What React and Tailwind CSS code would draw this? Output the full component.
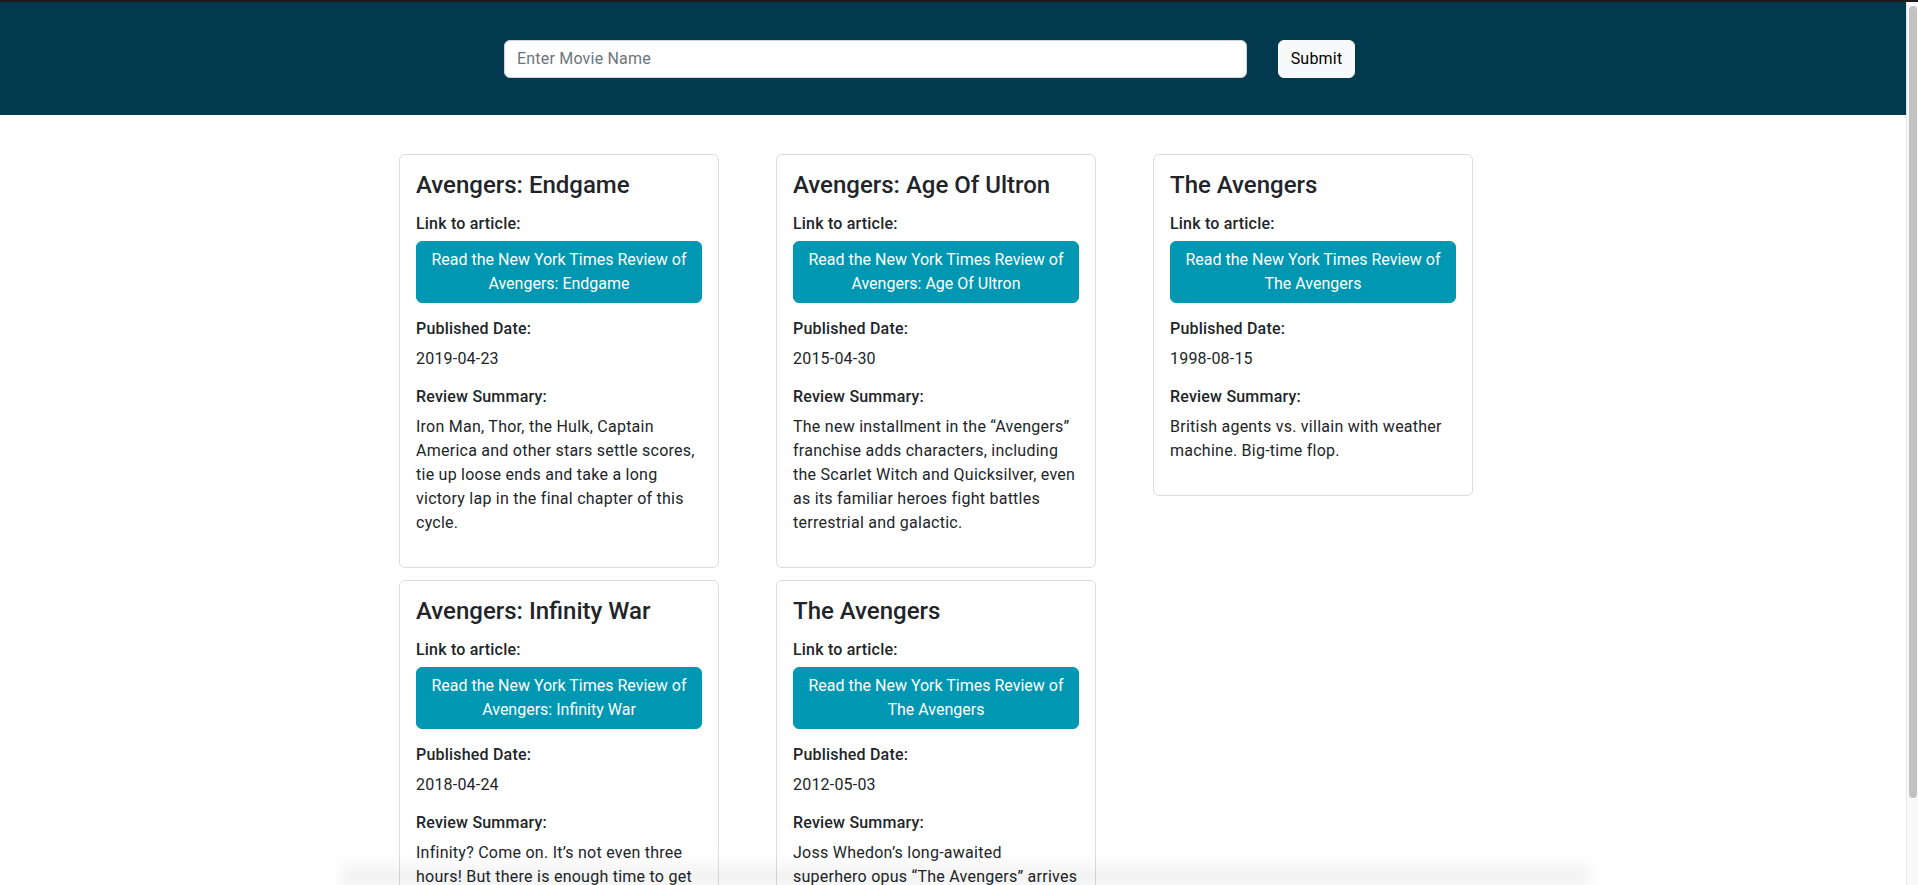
const reviews = [
  {
    title: "Avengers: Endgame",
    date: "2019-04-23",
    summary:
      "Iron Man, Thor, the Hulk, Captain America and other stars settle scores, tie up loose ends and take a long victory lap in the final chapter of this cycle.",
  },
  {
    title: "Avengers: Age Of Ultron",
    date: "2015-04-30",
    summary:
      "The new installment in the \u201cAvengers\u201d franchise adds characters, including the Scarlet Witch and Quicksilver, even as its familiar heroes fight battles terrestrial and galactic.",
  },
  {
    title: "The Avengers",
    date: "1998-08-15",
    summary: "British agents vs. villain with weather machine. Big-time flop.",
  },
  {
    title: "Avengers: Infinity War",
    date: "2018-04-24",
    summary:
      "Infinity? Come on. It\u2019s not even three hours! But there is enough time to get the gang together and let them all take a swing at the biggest villain yet.",
  },
  {
    title: "The Avengers",
    date: "2012-05-03",
    summary:
      "Joss Whedon\u2019s long-awaited superhero opus \u201cThe Avengers\u201d arrives with a mighty roster of heroes, a lot of noise and a few good jokes.",
  },
];

function ReviewCard({ review }) {
  return (
    <div className="w-[320px] bg-white border border-[#dcdcdc] rounded-[6px]">
      <div className="p-4">
        <h4 className="text-[24px] leading-[29px] font-medium tracking-normal text-[#212529] mb-[14px]">
          {review.title}
        </h4>
        <h6 className="text-[16px] leading-[19px] font-medium text-[#212529] mb-2">
          Link to article:
        </h6>
        <a
          href="#"
          className="block w-full bg-[#0097b2] border border-[#0097b2] text-white text-center text-[16px] leading-[24px] tracking-normal rounded-[6px] px-3 py-[6px] mb-4"
        >
          <span className="whitespace-nowrap">Read the New York Times Review of</span>
          <br />
          {review.title}
        </a>
        <h6 className="text-[16px] leading-[19px] font-medium text-[#212529] mb-[9px]">
          Published Date:
        </h6>
        <p className="text-[16px] leading-[24px] text-[#212529] mb-4">{review.date}</p>
        <h6 className="text-[16px] leading-[19px] font-medium text-[#212529] mb-[9px]">
          Review Summary:
        </h6>
        <p className="text-[16px] leading-[24px] tracking-[0.25px] text-[#212529] mb-4">
          {review.summary}
        </p>
      </div>
    </div>
  );
}

export default function App() {
  return (
    <div
      className="relative h-[885px] overflow-hidden bg-white flex border-t-2 border-[#1c1c1c] tracking-[0.2px]"
      style={{ fontFamily: "Roboto, 'Liberation Sans', sans-serif" }}
    >
      <div className="flex-1 min-w-0">
        <header className="h-[113px] bg-[#02394f] flex items-center pl-[504px]">
          <input
            type="text"
            placeholder="Enter Movie Name"
            className="w-[743px] h-[38px] bg-white border border-[#ced4da] rounded-[6px] px-3 text-[16px] text-[#212529] placeholder:text-[#6c757d] outline-none"
          />
          <button className="ml-[31px] w-[77px] h-[38px] bg-[#f8f9fa] border border-[#f8f9fa] rounded-[6px] text-[16px] text-black">
            Submit
          </button>
        </header>

        <main className="pt-[39px]">
          <div className="mx-auto w-[1140px] px-4 grid grid-cols-[repeat(3,320px)] gap-x-[57px] gap-y-[12px] items-start">
            {reviews.map((review, i) => (
              <ReviewCard key={i} review={review} />
            ))}
          </div>
        </main>
      </div>

      <div className="w-[12px] shrink-0 bg-[#f9f9f9] border-l border-[#e6e6e6] pt-[4px] pl-[2px] pr-[1px]">
        <div className="h-[792px] rounded-full bg-[#c2c2c2]"></div>
      </div>

      <div className="absolute bottom-0 left-[340px] w-[1250px] h-[30px] bg-gradient-to-b from-transparent to-black/[0.07] blur-[6px] pointer-events-none"></div>
    </div>
  );
}
